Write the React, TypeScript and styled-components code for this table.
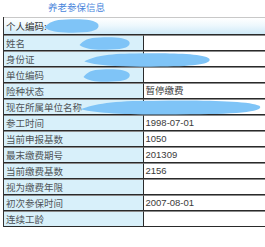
import styled, { createGlobalStyle } from "styled-components";

const GlobalStyle = createGlobalStyle`
    html, body {
        margin: 0;
        padding: 0;
        background: #ffffff;
        overflow: hidden;
    }
`;

const rows: [string, string][] = [
    ["姓名", ""],
    ["身份证", ""],
    ["单位编码", ""],
    ["险种状态", "暂停缴费"],
    ["现在所属单位名称", ""],
    ["参工时间", "1998-07-01"],
    ["当前申报基数", "1050"],
    ["最末缴费期号", "201309"],
    ["当前缴费基数", "2156"],
    ["视为缴费年限", ""],
    ["初次参保时间", "2007-08-01"],
    ["连续工龄", ""],
];

// redaction smudges over personal data
const blobs = [
    {left: 44, top: 18, w: 56, h: 16},
    {left: 79, top: 36, w: 52, h: 15},
    {left: 83, top: 52, w: 130, h: 16},
    {left: 83, top: 68, w: 48, h: 15},
    {left: 79, top: 99, w: 186, h: 17},
];

export default function App() {
    return <Page>
        <GlobalStyle/>
        <Title>养老参保信息</Title>
        <InfoTable>
            <tbody>
            <tr>
                <HeadCell colSpan={2}>个人编码:</HeadCell>
            </tr>
            {rows.map(([label, value]) => (
                <tr key={label}>
                    <LabelCell>{label}</LabelCell>
                    <ValueCell>{value}</ValueCell>
                </tr>
            ))}
            </tbody>
        </InfoTable>
        {blobs.map((b, i) => (
            <Blob key={i} width={b.w} height={b.h} viewBox="0 0 100 20" preserveAspectRatio="none"
                  style={{left: b.left, top: b.top}}>
                <path d="M1 12 C8 6 18 2 40 2 C65 1 92 2 97 8 C100 14 88 18 60 18 C35 19 12 18 1 12 Z"
                      fill="#7fc4f7"/>
            </Blob>
        ))}
    </Page>
}

const Page = styled.div`
    position: relative;
    width: 265px;
    height: 247px;
    overflow: hidden;
    font-family: "Noto Sans CJK SC", "Liberation Sans", sans-serif;
`;

const Title = styled.div`
    height: 17px;
    padding-left: 48px;
    font-size: 9.5px;
    line-height: 15px;
    color: #4a86dc;
`;

const InfoTable = styled.table`
    margin-left: 3px;
    width: 280px;
    border-collapse: separate;
    border-spacing: 0;
    border-left: 1px solid #333;
    font-size: 9.5px;
    color: #3a3a3a;
    table-layout: fixed;
`;

const HeadCell = styled.td`
    height: 16px;
    padding: 0 0 0 2px;
    border-top: 1px solid #c8c8c8;
    border-bottom: 1px solid #2a2a2a;
    background: linear-gradient(to bottom, #ffffff 0%, #eef8fd 45%, #cfeaf8 100%);
    color: #333;
    line-height: 16px;
`;

const LabelCell = styled.td`
    width: 89px;
    height: 14px;
    padding: 0 0 0 2px;
    border-top: 1px solid #8a8a8a;
    border-bottom: 1px solid #2a2a2a;
    border-right: 1px solid #2a2a2a;
    background: #d8f0fa;
    color: #4f5458;
    line-height: 14px;
    white-space: nowrap;
`;

const ValueCell = styled.td`
    height: 14px;
    padding: 0 0 0 2px;
    border-top: 1px solid #8a8a8a;
    border-bottom: 1px solid #2a2a2a;
    background: #ffffff;
    font-family: "Liberation Sans", "Noto Sans CJK SC", sans-serif;
    color: #3a3a3a;
    line-height: 14px;
    white-space: nowrap;
`;

const Blob = styled.svg`
    position: absolute;
    display: block;
`;
